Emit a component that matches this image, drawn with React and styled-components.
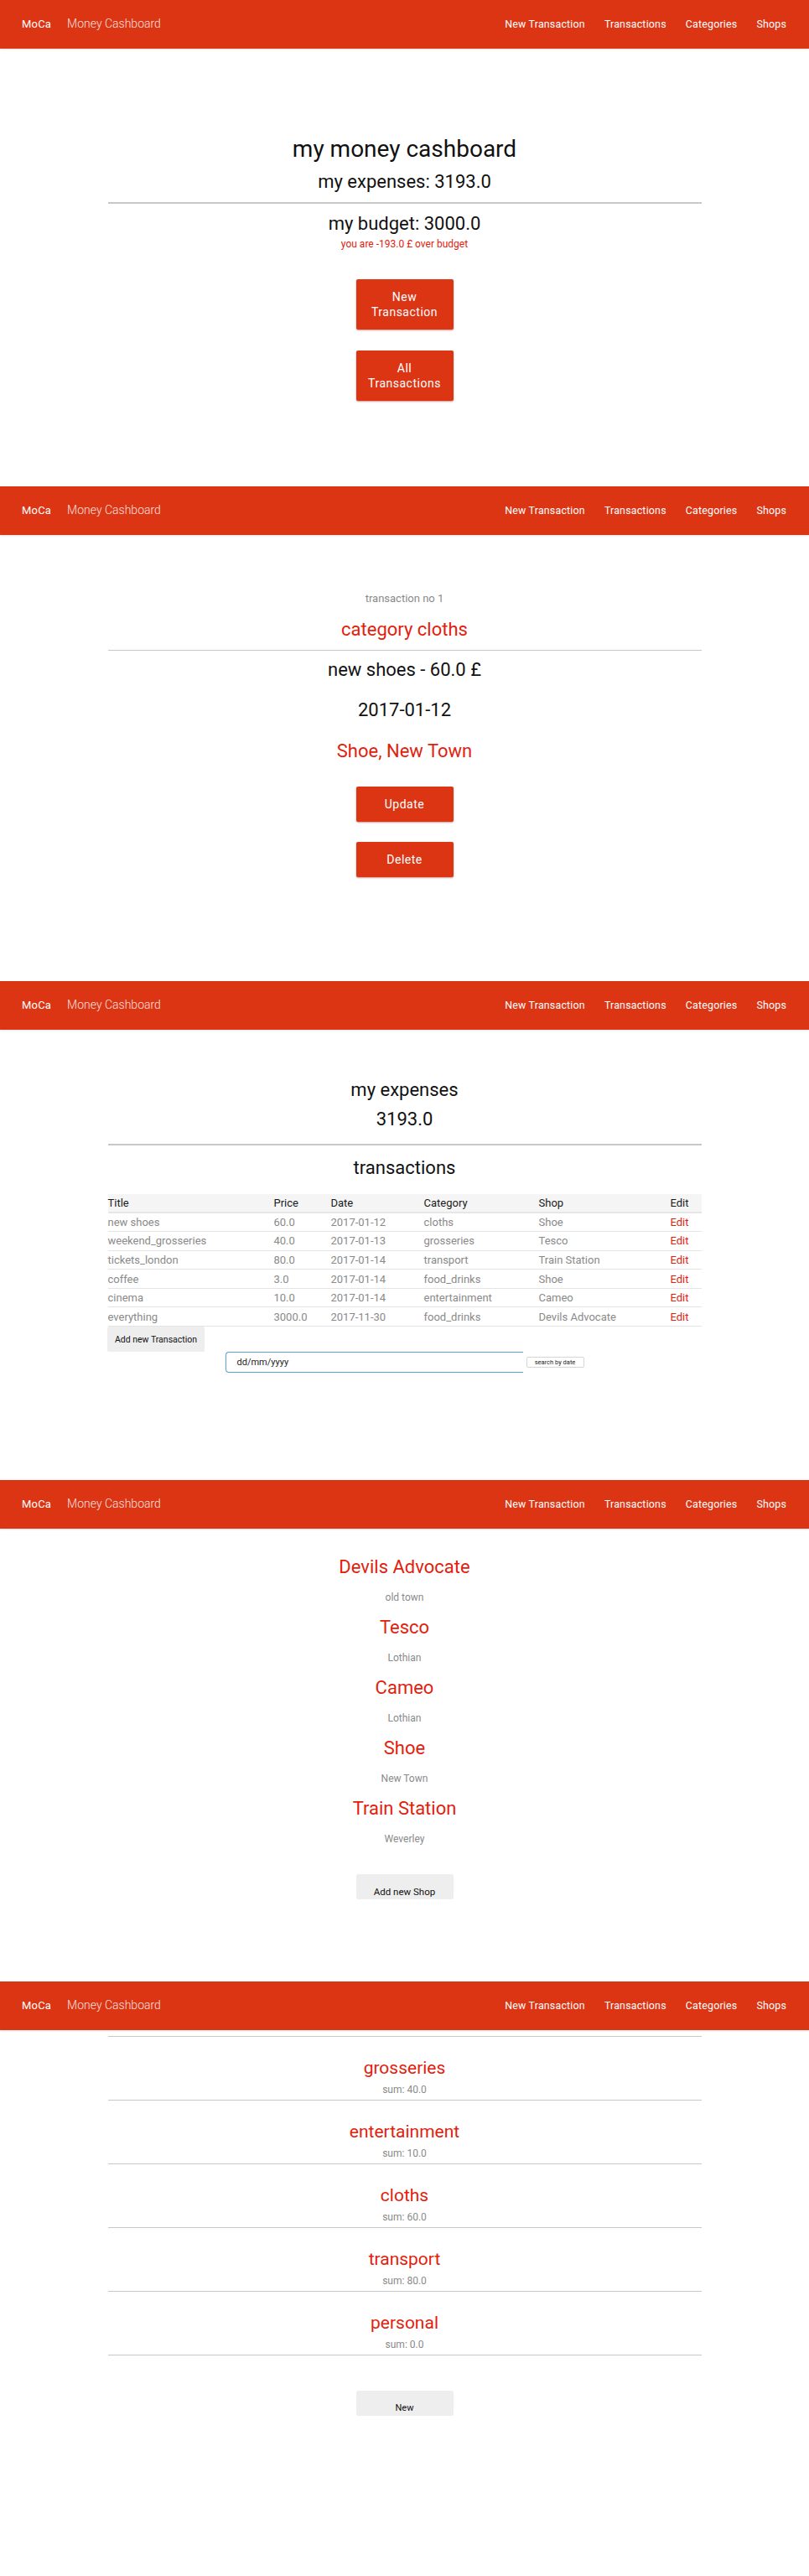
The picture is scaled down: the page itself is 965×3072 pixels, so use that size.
import React from 'react'
import styled, { createGlobalStyle } from 'styled-components'

const RED = '#dc3514'
const TEXT_RED = '#e2210d'
const GREY = '#8a8a8a'

const GlobalStyle = createGlobalStyle`
  body {
    margin: 0;
    background: #fff;
    font-family: Roboto, "Noto Sans", "Liberation Sans", sans-serif;
    color: #111;
  }
  * { box-sizing: border-box; }
`

const Screen = styled.section`
  height: ${p => p.$h}px;
  display: flex;
  flex-direction: column;
  align-items: center;
  overflow: hidden;
`

const Nav = styled.nav`
  align-self: stretch;
  height: 58px;
  flex-shrink: 0;
  background: ${RED};
  box-shadow: 0 1px 2px rgba(0, 0, 0, 0.12);
  display: flex;
  align-items: center;
  justify-content: space-between;
  padding: 0 27px 2px 26px;
  color: #fff;
`
const Brand = styled.div`
  display: flex;
  align-items: center;
  gap: 19px;
`
const Logo = styled.span`
  font-size: 13px;
  font-weight: 400;
  letter-spacing: 0.2px;
`
const AppName = styled.span`
  font-size: 14px;
  font-weight: 300;
  color: rgba(255, 255, 255, 0.88);
`
const NavLinks = styled.div`
  display: flex;
  align-items: center;
  gap: 23px;
`
const NavLink = styled.a`
  font-size: 12.4px;
  font-weight: 400;
  letter-spacing: 0.2px;
  color: #fff;
  text-decoration: none;
`

const Title = styled.h1`
  margin: ${p => p.$mt || 0}px 0 0;
  font-size: 28px;
  line-height: 34px;
  font-weight: 400;
`
const Heading = styled.h2`
  margin: ${p => p.$mt || 0}px 0 0;
  font-size: ${p => p.$size || 22}px;
  line-height: ${p => (p.$size || 22) + 6}px;
  font-weight: 400;
  color: ${p => (p.$red ? TEXT_RED : '#111')};
`
const Note = styled.p`
  margin: ${p => p.$mt || 0}px 0 0;
  font-size: ${p => p.$size || 12}px;
  line-height: 16px;
  color: ${p => (p.$red ? TEXT_RED : GREY)};
`
const Rule = styled.hr`
  width: 708px;
  margin: ${p => p.$mt || 0}px 0 0;
  border: none;
  border-top: ${p => p.$w || 2}px solid #c8c8c8;
  height: 0;
`

const RedButton = styled.button`
  margin-top: ${p => p.$mt || 0}px;
  width: 116px;
  height: ${p => p.$h || 60}px;
  background: ${RED};
  color: #fff;
  border: none;
  border-radius: 2px;
  box-shadow: 0 1px 2px rgba(150, 20, 0, 0.45);
  font-family: inherit;
  font-size: 14px;
  font-weight: 400;
  line-height: 18px;
  letter-spacing: 0.5px;
  padding: 0 14px;
`
const FlatButton = styled.button`
  margin-top: ${p => p.$mt || 0}px;
  align-self: ${p => (p.$left ? 'flex-start' : 'center')};
  margin-left: ${p => (p.$left ? 128 : 0)}px;
  width: 116px;
  height: 30px;
  background: #eeeeee;
  color: #111;
  border: none;
  border-radius: 2px;
  font-family: inherit;
  font-size: ${p => p.$size || 11}px;
  font-weight: 400;
  padding: ${p => p.$pt || 0}px 0 0;
`

const Table = styled.table`
  margin-top: 17px;
  width: 708px;
  border-collapse: collapse;
  font-size: 13px;
`
const Th = styled.th`
  background: #f5f5f5;
  height: 22px;
  padding: 0;
  text-align: left;
  font-weight: 400;
  color: #1a1a1a;
  border-bottom: 2px solid #e6e6e6;
  width: ${p => p.$w}px;
`
const Td = styled.td`
  height: 22.6px;
  padding: 0;
  color: ${p => (p.$red ? TEXT_RED : GREY)};
  border-bottom: 1.5px solid #e4e4e4;
`

const SearchRow = styled.form`
  display: flex;
  align-items: center;
  gap: 4px;
  margin-top: 0;
`
const DateInput = styled.div`
  width: 355px;
  height: 25px;
  border: 1px solid #5aa2d0;
  border-right: none;
  border-radius: 4px 0 0 4px;
  display: flex;
  align-items: center;
  padding-left: 13px;
  font-size: 11px;
  color: #222;
`
const SmallButton = styled.button`
  width: 69px;
  height: 13px;
  padding: 0;
  background: #fff;
  border: 1px solid #d6d6d6;
  border-radius: 2px;
  font-family: inherit;
  font-size: 7.5px;
  color: #222;
  line-height: 11px;
`

const ShopList = styled.div`
  margin-top: 32px;
  display: flex;
  flex-direction: column;
  align-items: center;
  gap: 14px;
`
const CategoryItem = styled.div`
  display: flex;
  flex-direction: column;
  align-items: center;
  padding-top: 24px;
  gap: 4px;
`

const transactions = [
  ['new shoes', '60.0', '2017-01-12', 'cloths', 'Shoe'],
  ['weekend_grosseries', '40.0', '2017-01-13', 'grosseries', 'Tesco'],
  ['tickets_london', '80.0', '2017-01-14', 'transport', 'Train Station'],
  ['coffee', '3.0', '2017-01-14', 'food_drinks', 'Shoe'],
  ['cinema', '10.0', '2017-01-14', 'entertainment', 'Cameo'],
  ['everything', '3000.0', '2017-11-30', 'food_drinks', 'Devils Advocate'],
]

const shops = [
  ['Devils Advocate', 'old town'],
  ['Tesco', 'Lothian'],
  ['Cameo', 'Lothian'],
  ['Shoe', 'New Town'],
  ['Train Station', 'Weverley'],
]

const categories = [
  ['grosseries', '40.0'],
  ['entertainment', '10.0'],
  ['cloths', '60.0'],
  ['transport', '80.0'],
  ['personal', '0.0'],
]

const Navbar = () => (
  <Nav>
    <Brand>
      <Logo>MoCa</Logo>
      <AppName>Money Cashboard</AppName>
    </Brand>
    <NavLinks>
      <NavLink href="#">New Transaction</NavLink>
      <NavLink href="#">Transactions</NavLink>
      <NavLink href="#">Categories</NavLink>
      <NavLink href="#">Shops</NavLink>
    </NavLinks>
  </Nav>
)

const App = () => {
  return (
    <>
      <GlobalStyle />

      <Screen $h={580}>
        <Navbar />
        <Title $mt={103}>my money cashboard</Title>
        <Heading $mt={8}>my expenses: 3193.0</Heading>
        <Rule $mt={10} />
        <Heading $mt={10}>my budget: 3000.0</Heading>
        <Note $mt={2} $red>you are -193.0 £ over budget</Note>
        <RedButton $mt={34}>New Transaction</RedButton>
        <RedButton $mt={25}>All Transactions</RedButton>
      </Screen>

      <Screen $h={590}>
        <Navbar />
        <Note $mt={68} $size={13}>transaction no 1</Note>
        <Heading $mt={15} $red>category cloths</Heading>
        <Rule $mt={10} $w={1.5} />
        <Heading $mt={9}>new shoes - 60.0 £</Heading>
        <Heading $mt={20}>2017-01-12</Heading>
        <Heading $mt={21} $red>Shoe, New Town</Heading>
        <RedButton $mt={28} $h={42}>Update</RedButton>
        <RedButton $mt={24} $h={42}>Delete</RedButton>
      </Screen>

      <Screen $h={595}>
        <Navbar />
        <Heading $mt={58}>my expenses</Heading>
        <Heading $mt={7}>3193.0</Heading>
        <Rule $mt={15} />
        <Heading $mt={13}>transactions</Heading>
        <Table>
          <thead>
            <tr>
              <Th $w={198}>Title</Th>
              <Th $w={68}>Price</Th>
              <Th $w={111}>Date</Th>
              <Th $w={137}>Category</Th>
              <Th $w={157}>Shop</Th>
              <Th $w={37}>Edit</Th>
            </tr>
          </thead>
          <tbody>
            {transactions.map(row => (
              <tr key={row[0]}>
                {row.map((cell, i) => <Td key={i}>{cell}</Td>)}
                <Td $red>Edit</Td>
              </tr>
            ))}
          </tbody>
        </Table>
        <FlatButton $left $size={10.5}>Add new Transaction</FlatButton>
        <SearchRow onSubmit={e => e.preventDefault()}>
          <DateInput>dd/mm/yyyy</DateInput>
          <SmallButton type="button">search by date</SmallButton>
        </SearchRow>
      </Screen>

      <Screen $h={598}>
        <Navbar />
        <ShopList>
          {shops.map(([name, area]) => (
            <React.Fragment key={name}>
              <Heading $red>{name}</Heading>
              <Note>{area}</Note>
            </React.Fragment>
          ))}
        </ShopList>
        <FlatButton $mt={34} $size={11.5} $pt={12}>Add new Shop</FlatButton>
      </Screen>

      <Screen $h={709}>
        <Navbar />
        <Rule $mt={7} $w={1.5} />
        {categories.map(([name, sum]) => (
          <React.Fragment key={name}>
            <CategoryItem>
              <Heading $red $size={21}>{name}</Heading>
              <Note>sum: {sum}</Note>
            </CategoryItem>
            <Rule $mt={4} $w={1.5} />
          </React.Fragment>
        ))}
        <FlatButton $mt={42} $size={11} $pt={10}>New</FlatButton>
      </Screen>
    </>
  )
}

export default App
